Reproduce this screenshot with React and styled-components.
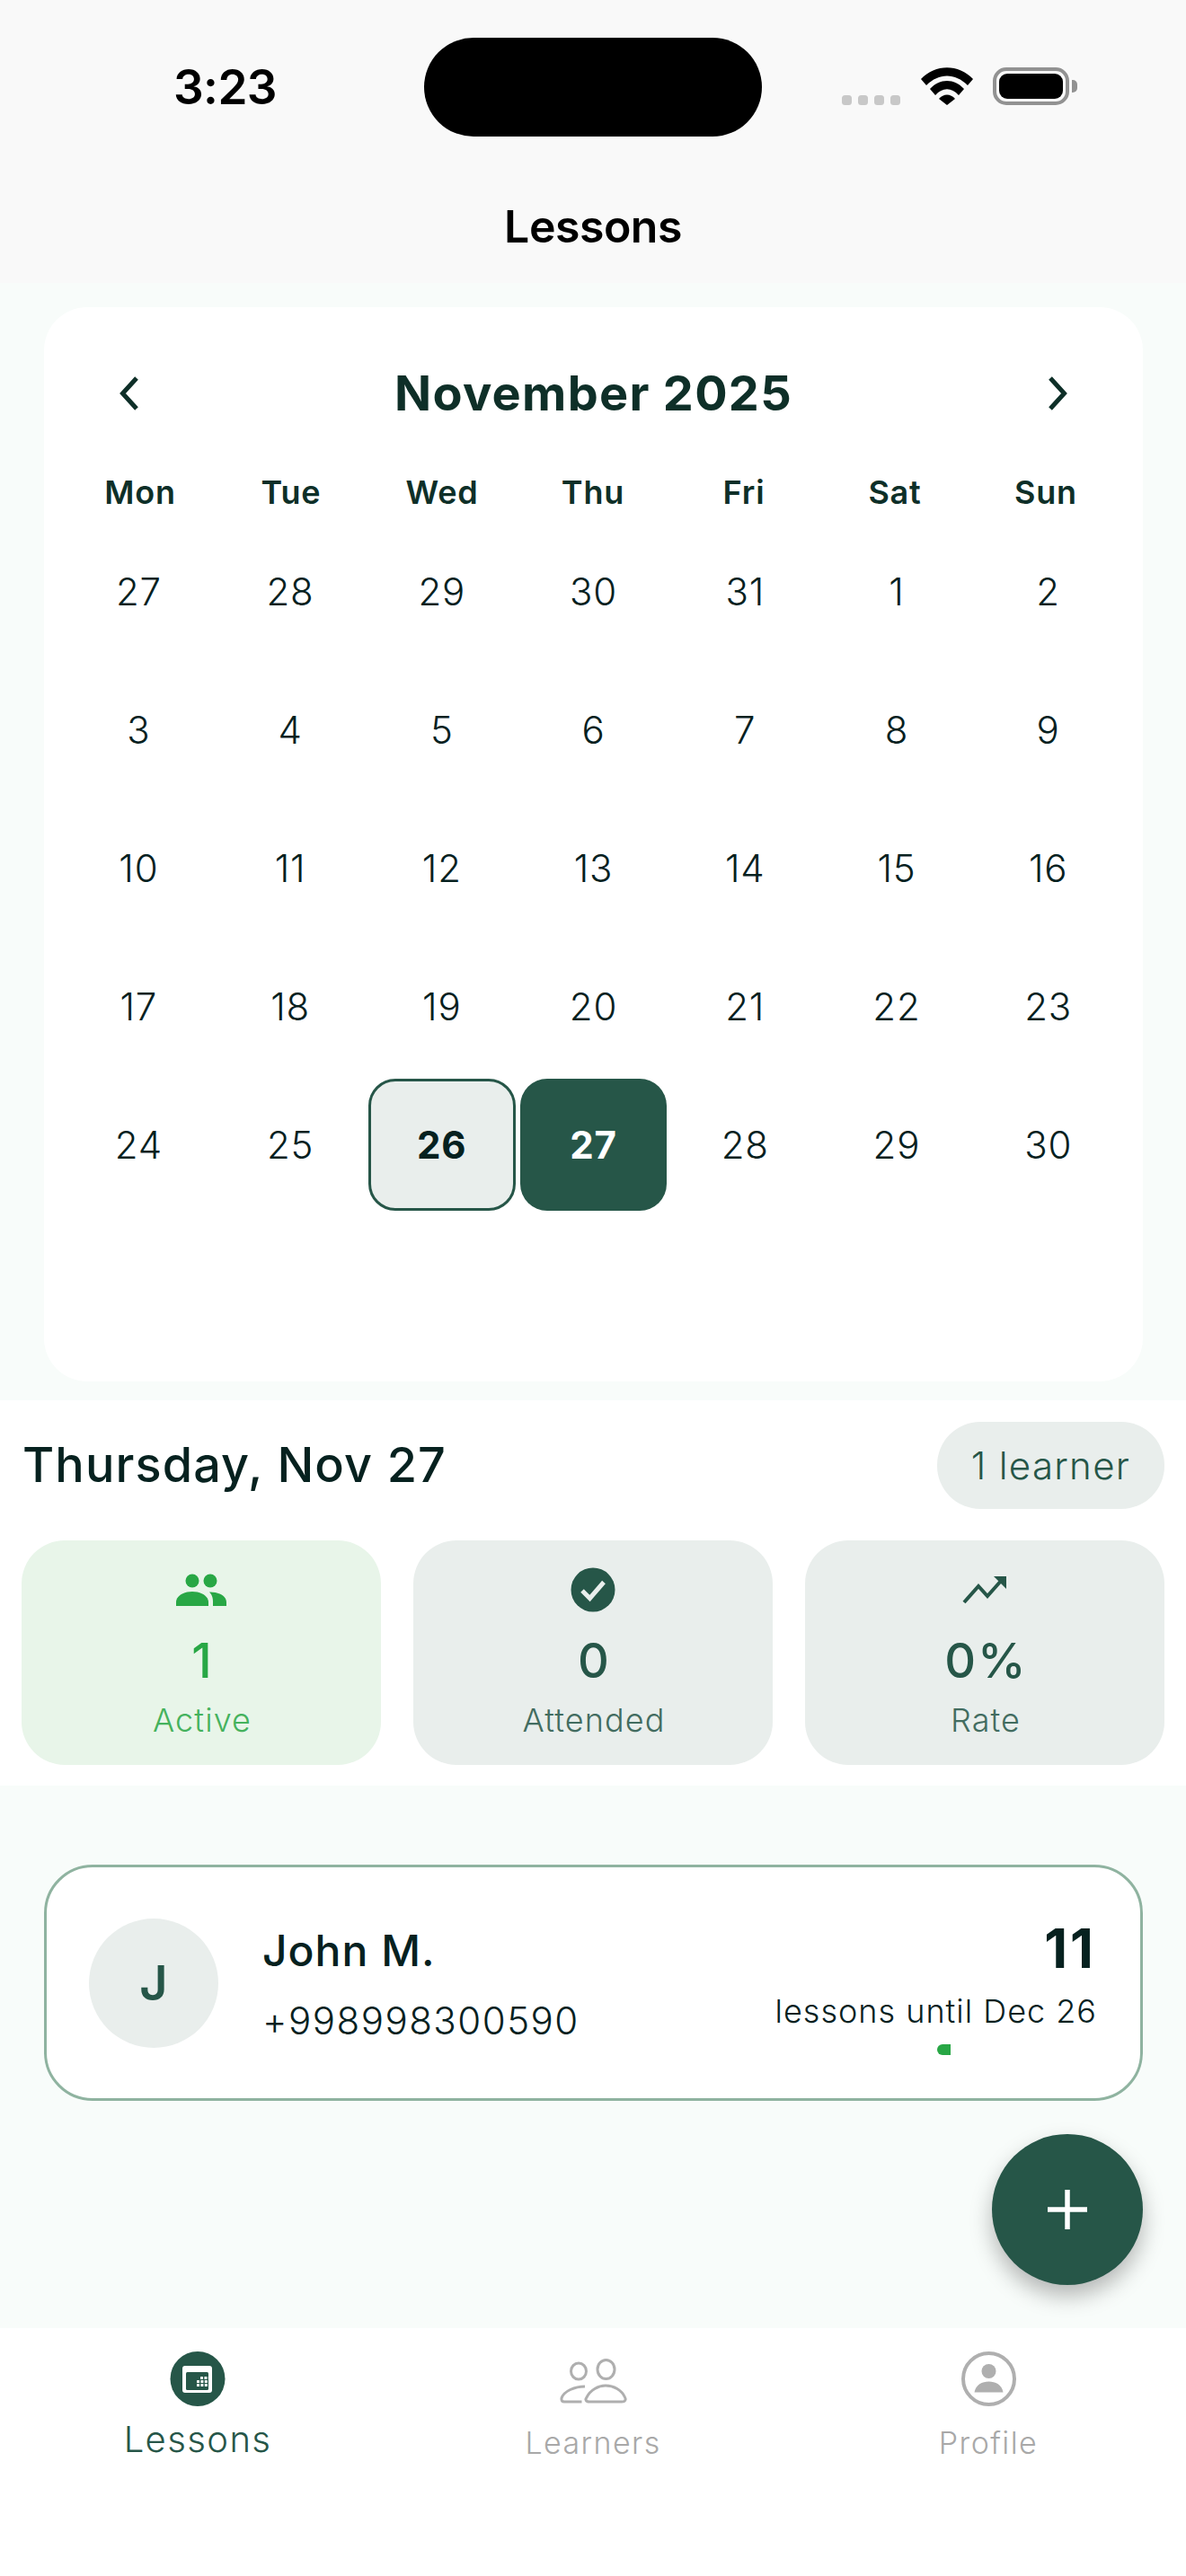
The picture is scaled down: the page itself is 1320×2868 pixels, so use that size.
import React from "react";
import styled, { createGlobalStyle } from "styled-components";

const PRIMARY = "#265648";
const DARK = "#06211f";
const MONTH = "#0e2f28";
const SOFT = "#e9eeec";
const GREEN = "#28a745";

const Global = createGlobalStyle`
  html, body { margin: 0; padding: 0; background: #f8fcfa; }
  * { box-sizing: border-box; }
  body { font-family: Inter, "Liberation Sans", sans-serif; }
`;

const Page = styled.div`
  position: relative;
  width: 1320px;
  height: 2868px;
  overflow: hidden;
  display: flex;
  flex-direction: column;
  background: #f8fcfa;
`;

const Header = styled.header`
  height: 315px;
  flex: none;
  background: #f9f9f9;
  display: flex;
  flex-direction: column;
  align-items: center;
`;

const StatusBar = styled.div`
  width: 100%;
  height: 152px;
  padding-top: 42px;
  display: grid;
  grid-template-columns: 472px 376px 472px;
`;

const Time = styled.div`
  padding: 27px 0 0 193px;
  font-size: 53px;
  line-height: 56px;
  font-weight: 600;
  color: #000;
  letter-spacing: -0.6px;
`;

const Island = styled.div`
  height: 110px;
  border-radius: 55px;
  background: #000;
`;

const StatusRight = styled.div`
  display: flex;
  align-items: flex-end;
  padding: 0 0 35px 89px;
`;

const SignalDots = styled.div`
  display: flex;
  gap: 7px;
  margin-right: 23px;
`;

const SignalDot = styled.span`
  width: 11px;
  height: 11px;
  border-radius: 3.5px;
  background: #c8c8c8;
`;

const Wifi = styled.svg`
  width: 58px;
  height: 42px;
  display: block;
  margin-right: 22px;
`;

const Battery = styled.div`
  position: relative;
  width: 85px;
  height: 42px;
  border: 4px solid #929292;
  border-radius: 15px;
  padding: 3px;
  &::after {
    content: "";
    position: absolute;
    right: -13px;
    top: 10px;
    width: 6px;
    height: 14px;
    border-radius: 0 5px 5px 0;
    background: #929292;
  }
`;

const BatteryFill = styled.div`
  width: 100%;
  height: 100%;
  border-radius: 9px;
  background: #000;
`;

const HeaderTitle = styled.h1`
  margin: 70px 0 0;
  font-size: 50px;
  line-height: 60px;
  font-weight: 600;
  color: #000;
  letter-spacing: -0.5px;
`;

const CalendarCard = styled.section`
  flex: none;
  height: 1196px;
  margin: 27px 48px 0 49px;
  padding: 46px 21px 0;
  background: #fff;
  border-radius: 48px;
`;

const MonthRow = styled.div`
  height: 100px;
  margin-bottom: 30px;
  padding: 0 63px;
  display: flex;
  align-items: center;
  justify-content: space-between;
`;

const MonthTitle = styled.h2`
  margin: 0 0 2px;
  font-size: 54px;
  font-weight: 700;
  letter-spacing: 1.3px;
  color: ${MONTH};
`;

const Chevron = styled.svg`
  width: 24px;
  height: 38px;
  display: block;
`;

const WeekHead = styled.div`
  height: 60px;
  margin: 0 2px 3px;
  display: grid;
  grid-template-columns: repeat(7, 168px);
`;

const WeekDay = styled.div`
  text-align: center;
  font-size: 36px;
  line-height: 60px;
  font-weight: 600;
  letter-spacing: 0.8px;
  color: ${MONTH};
`;

const DayGrid = styled.div`
  display: grid;
  grid-template-columns: repeat(7, 1fr);
  grid-auto-rows: 154px;
`;

const Day = styled.div`
  margin: 3.5px 2.4px;
  border-radius: 30px;
  display: flex;
  align-items: center;
  justify-content: center;
  font-size: 42px;
  letter-spacing: 0.8px;
  font-weight: ${(p) => (p.$kind ? 700 : 350)};
  color: ${(p) => (p.$kind === "selected" ? "#fff" : DARK)};
  background: ${(p) =>
    p.$kind === "selected" ? PRIMARY : p.$kind === "today" ? SOFT : "transparent"};
  border: ${(p) => (p.$kind === "today" ? `3px solid ${PRIMARY}` : "none")};
`;

const DaySection = styled.section`
  flex: none;
  height: 429px;
  margin-top: 21px;
  padding: 24px 24px 0;
  background: #fff;
`;

const DayHead = styled.div`
  height: 97px;
  margin-bottom: 35px;
  display: flex;
  align-items: center;
  justify-content: space-between;
`;

const DayTitle = styled.h2`
  margin: 0 0 2px 1px;
  font-size: 54px;
  font-weight: 500;
  letter-spacing: 1.1px;
  color: ${DARK};
`;

const LearnerPill = styled.div`
  width: 253px;
  height: 97px;
  border-radius: 48px;
  background: ${SOFT};
  display: flex;
  align-items: center;
  justify-content: center;
  font-size: 42px;
  font-weight: 350;
  letter-spacing: 1.3px;
  color: ${PRIMARY};
`;

const Stats = styled.div`
  display: grid;
  grid-template-columns: repeat(3, 400px);
  column-gap: 36px;
`;

const Stat = styled.div`
  height: 250px;
  border-radius: 48px;
  background: ${(p) => (p.$active ? "#e8f5e9" : SOFT)};
  color: ${(p) => (p.$active ? GREEN : PRIMARY)};
  display: flex;
  flex-direction: column;
  align-items: center;
`;

const StatIcon = styled.div`
  height: 54px;
  margin-top: 28px;
  display: flex;
  align-items: center;
  justify-content: center;
`;

const StatValue = styled.div`
  margin: 20px -3px 0 0;
  font-size: 54px;
  line-height: 64px;
  font-weight: 500;
  letter-spacing: 2px;
`;

const StatLabel = styled.div`
  margin: 12px -2px 0 0;
  font-size: 36px;
  line-height: 44px;
  font-weight: 350;
  letter-spacing: 1.1px;
  opacity: 0.85;
`;

const LessonCard = styled.article`
  flex: none;
  height: 263px;
  margin: 88px 48px 0 49px;
  padding: 0 50px 0 47px;
  background: #fff;
  border: 3px solid #8fb3a0;
  border-radius: 54px;
  display: flex;
  align-items: center;
`;

const Avatar = styled.div`
  width: 144px;
  height: 144px;
  flex: none;
  border-radius: 50%;
  background: ${SOFT};
  display: flex;
  align-items: center;
  justify-content: center;
  font-size: 54px;
  font-weight: 600;
  color: ${PRIMARY};
`;

const LearnerInfo = styled.div`
  flex: 1;
  margin-left: 49px;
  padding-top: 6px;
`;

const LearnerName = styled.div`
  font-size: 48px;
  line-height: 60px;
  font-weight: 450;
  letter-spacing: 1px;
  color: ${DARK};
`;

const LearnerPhone = styled.div`
  margin-top: 18px;
  font-size: 42px;
  line-height: 60px;
  font-weight: 350;
  letter-spacing: 1.5px;
  color: ${DARK};
`;

const LessonsInfo = styled.div`
  width: 354px;
  display: flex;
  flex-direction: column;
  align-items: flex-end;
  padding-top: 6px;
`;

const LessonsCount = styled.div`
  font-size: 60px;
  line-height: 70px;
  font-weight: 700;
  letter-spacing: 3px;
  margin-right: -1px;
  color: ${DARK};
`;

const LessonsUntil = styled.div`
  margin-top: 13px;
  margin-right: -2px;
  font-size: 36px;
  line-height: 44px;
  font-weight: 350;
  letter-spacing: 1px;
  white-space: nowrap;
  color: ${DARK};
`;

const ProgressTrack = styled.div`
  width: 100%;
  height: 12px;
  margin-top: 15px;
  padding-left: 178px;
`;

const ProgressFill = styled.div`
  height: 100%;
  border-radius: 6px 0 0 6px;
  background: ${GREEN};
`;

const Fab = styled.button`
  position: absolute;
  left: 1104px;
  top: 2376px;
  width: 168px;
  height: 168px;
  padding: 0;
  border: none;
  border-radius: 50%;
  background: ${PRIMARY};
  box-shadow: 0 12px 24px rgba(0, 0, 0, 0.28);
  display: flex;
  align-items: center;
  justify-content: center;
`;

const TabBar = styled.nav`
  position: absolute;
  left: 0;
  right: 0;
  bottom: 0;
  height: 276px;
  background: #fff;
  display: grid;
  grid-template-columns: repeat(3, 440px);
`;

const Tab = styled.div`
  padding-top: 26px;
  display: flex;
  flex-direction: column;
  align-items: center;
`;

const TabIcon = styled.svg`
  width: 81px;
  height: 61px;
  display: block;
`;

const TabLabel = styled.div`
  font-size: ${(p) => (p.$active ? "40px" : "34px")};
  line-height: 48px;
  font-weight: 350;
  margin-top: ${(p) => (p.$active ? "13px" : "17px")};
  letter-spacing: ${(p) => (p.$active ? "1.4px" : "1.4px")};
  color: ${(p) => (p.$active ? PRIMARY : "#a8a8a8")};
`;

const weeks = [
  [27, 28, 29, 30, 31, 1, 2],
  [3, 4, 5, 6, 7, 8, 9],
  [10, 11, 12, 13, 14, 15, 16],
  [17, 18, 19, 20, 21, 22, 23],
  [24, 25, 26, 27, 28, 29, 30],
];
const weekDays = ["Mon", "Tue", "Wed", "Thu", "Fri", "Sat", "Sun"];

const dotRows = [
  [223, 2646],
  [219, 2650],
  [219, 2654],
];

export default function App() {
  return (
    <Page>
      <Global />
      <Header>
        <StatusBar>
          <Time>3:23</Time>
          <Island />
          <StatusRight>
            <SignalDots>
              <SignalDot />
              <SignalDot />
              <SignalDot />
              <SignalDot />
            </SignalDots>
            <Wifi viewBox="0 0 58 42">
              <path d="M0 13 C16 -4 42 -4 58 13 L52 20 C38 6 20 6 6 20 Z" fill="#000" />
              <path d="M10 24 C21 12 37 12 48 24 L42 31 C34 22 24 22 16 31 Z" fill="#000" />
              <path d="M20 35 C25 29 33 29 38 35 L29 42 Z" fill="#000" />
            </Wifi>
            <Battery>
              <BatteryFill />
            </Battery>
          </StatusRight>
        </StatusBar>
        <HeaderTitle>Lessons</HeaderTitle>
      </Header>

      <CalendarCard>
        <MonthRow>
          <Chevron viewBox="0 0 24 38">
            <path d="M19 2 L3.5 19 L19 36" fill="none" stroke={MONTH} strokeWidth="5" />
          </Chevron>
          <MonthTitle>November 2025</MonthTitle>
          <Chevron viewBox="0 0 24 38">
            <path d="M5 2 L20.5 19 L5 36" fill="none" stroke={MONTH} strokeWidth="5" />
          </Chevron>
        </MonthRow>
        <WeekHead>
          {weekDays.map((d) => (
            <WeekDay key={d}>{d}</WeekDay>
          ))}
        </WeekHead>
        <DayGrid>
          {weeks.flatMap((week, w) =>
            week.map((d, i) => (
              <Day
                key={`${w}-${i}`}
                $kind={w === 4 && d === 26 ? "today" : w === 4 && d === 27 ? "selected" : undefined}
              >
                {d}
              </Day>
            ))
          )}
        </DayGrid>
      </CalendarCard>

      <DaySection>
        <DayHead>
          <DayTitle>Thursday, Nov 27</DayTitle>
          <LearnerPill>1 learner</LearnerPill>
        </DayHead>
        <Stats>
          <Stat $active>
            <StatIcon>
              <svg width="56" height="36" viewBox="0 0 56 36">
                <ellipse cx="18" cy="8" rx="7.5" ry="7.5" fill={GREEN} />
                <ellipse cx="38" cy="8" rx="7.5" ry="7.5" fill={GREEN} />
                <path d="M0 36 V32 C0 25 8 20 18 20 C28 20 36 25 36 32 V36 Z" fill={GREEN} />
                <path d="M38 20.5 C48 20.5 56 25 56 32 V36 H41 V31 C41 27 40 23.5 37 20.5 Z" fill={GREEN} />
              </svg>
            </StatIcon>
            <StatValue>1</StatValue>
            <StatLabel>Active</StatLabel>
          </Stat>
          <Stat>
            <StatIcon>
              <svg width="50" height="50" viewBox="0 0 50 50">
                <circle cx="25" cy="25" r="24.5" fill={PRIMARY} />
                <path d="M13 26 L21.5 34.5 L37 16.5" fill="none" stroke={SOFT} strokeWidth="5" />
              </svg>
            </StatIcon>
            <StatValue>0</StatValue>
            <StatLabel>Attended</StatLabel>
          </Stat>
          <Stat>
            <StatIcon>
              <svg width="50" height="32" viewBox="0 0 50 32">
                <path d="M2 30 L18 12 L28 23 L44 5" fill="none" stroke={PRIMARY} strokeWidth="4" />
                <path d="M35 1 H49 V15 Z" fill={PRIMARY} />
              </svg>
            </StatIcon>
            <StatValue>0%</StatValue>
            <StatLabel>Rate</StatLabel>
          </Stat>
        </Stats>
      </DaySection>

      <LessonCard>
        <Avatar>J</Avatar>
        <LearnerInfo>
          <LearnerName>John M.</LearnerName>
          <LearnerPhone>+998998300590</LearnerPhone>
        </LearnerInfo>
        <LessonsInfo>
          <LessonsCount>11</LessonsCount>
          <LessonsUntil>lessons until Dec 26</LessonsUntil>
          <ProgressTrack>
            <ProgressFill style={{ width: 15 }} />
          </ProgressTrack>
        </LessonsInfo>
      </LessonCard>

      <Fab aria-label="Add">
        <svg width="44" height="44" viewBox="0 0 44 44">
          <path d="M22 0 V44 M0 22 H44" stroke="#fff" strokeWidth="5.5" />
        </svg>
      </Fab>

      <TabBar>
        <Tab>
          <TabIcon viewBox="180 2618 81 61">
            <circle cx="220" cy="2648.5" r="30.5" fill={PRIMARY} />
            <rect x="203" y="2634" width="33" height="30" rx="3" fill="#fff" />
            <rect x="207" y="2641" width="25" height="20" rx="1.5" fill={PRIMARY} />
            {dotRows.map(([x, y], r) =>
              Array.from({ length: r === 0 ? 3 : r === 1 ? 4 : 3 }).map((_, i) => (
                <rect key={`${r}-${i}`} x={x + i * 4.4} y={y} width="3" height="3" rx="0.6" fill="#fff" />
              ))
            )}
          </TabIcon>
          <TabLabel $active>Lessons</TabLabel>
        </Tab>
        <Tab>
          <TabIcon viewBox="0 0 81 61">
            <g fill="none" stroke="#afafaf" strokeWidth="3">
              <ellipse cx="24" cy="22" rx="8.5" ry="9" />
              <ellipse cx="54.5" cy="20" rx="9.5" ry="10.5" />
              <path d="M31 39 C20 39 7.5 44 5 52 C4.5 55 6 56 8 56 H27.5" />
              <path d="M36 56 C32 56 31 53.5 33 51 C37 43 46 38 54 38 C63 38 72 43 75.5 51 C77 53.5 76 56 72 56 Z" />
            </g>
          </TabIcon>
          <TabLabel>Learners</TabLabel>
        </Tab>
        <Tab>
          <TabIcon viewBox="0 0 81 61">
            <circle cx="40.5" cy="30.5" r="28.5" fill="none" stroke="#afafaf" strokeWidth="4" />
            <circle cx="40.5" cy="22" r="8" fill="#afafaf" />
            <path d="M24.5 45.5 C26 37 33 33.5 40.5 33.5 C48 33.5 55 37 56.5 45.5 Z" fill="#afafaf" />
          </TabIcon>
          <TabLabel>Profile</TabLabel>
        </Tab>
      </TabBar>
    </Page>
  );
}
